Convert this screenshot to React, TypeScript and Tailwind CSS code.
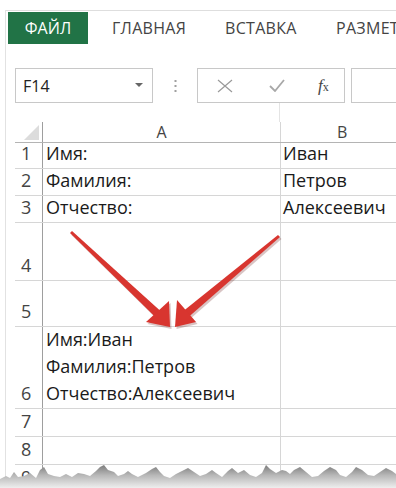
const rows: { n: string; h: string; a: string[]; b: string }[] = [
  { n: "1", h: "h-[26px]", a: ["Имя:"], b: "Иван" },
  { n: "2", h: "h-[27px]", a: ["Фамилия:"], b: "Петров" },
  { n: "3", h: "h-[27px]", a: ["Отчество:"], b: "Алексеевич" },
  { n: "4", h: "h-[58px]", a: [], b: "" },
  { n: "5", h: "h-[46px]", a: [], b: "" },
  { n: "6", h: "h-[82px]", a: ["Имя:Иван", "Фамилия:Петров", "Отчество:Алексеевич"], b: "" },
  { n: "7", h: "h-[28px]", a: [], b: "" },
  { n: "8", h: "h-[28px]", a: [], b: "" },
  { n: "9", h: "h-[28px]", a: [], b: "" },
];

function TornEdge() {
  const pts =
    "0,488 0,479 6,476 10,478 14,472 18,477 24,476 30,473 36,478 40,470 44,467 48,474 54,476 60,477 66,474 72,477 78,473 84,474 90,476 96,471 100,467 104,465 108,470 114,472 118,476 124,474 128,471 132,474 138,477 146,473 152,469 156,467 160,472 164,476 170,478 176,474 182,471 188,468 194,472 200,476 206,474 212,470 216,473 222,477 228,471 232,468 238,473 244,470 250,475 256,477 262,473 266,465 270,469 276,473 282,470 286,471 290,474 294,470 300,467 306,472 312,477 318,476 324,471 330,467 336,470 340,475 346,477 352,472 356,467 362,470 368,475 374,476 380,472 386,468 392,471 396,474 396,488";
  return (
    <svg className="absolute left-0 bottom-0" width="396" height="30" viewBox="0 458 396 30">
      <defs>
        <linearGradient id="torn" x1="0" y1="0" x2="0" y2="1">
          <stop offset="0" stopColor="#7c7c7c" />
          <stop offset="0.45" stopColor="#b8b8b8" />
          <stop offset="1" stopColor="#eeeeee" />
        </linearGradient>
      </defs>
      <polygon points={pts} fill="url(#torn)" />
    </svg>
  );
}

function Arrows() {
  return (
    <svg className="absolute left-0 top-0" width="396" height="488" viewBox="0 0 396 488">
      <g fill="#6b1a17" opacity="0.25" transform="translate(1.5,2)">
        <polygon points="72,230.9 162.7,313.1 157.3,318.9 70,233.1" />
        <polygon points="170,327 146,322 169,301" />
        <polygon points="278,234.9 183.4,311 188.6,317 280,237.1" />
        <polygon points="175,327 177,300 196,322" />
      </g>
      <g fill="#d8352f">
        <polygon points="72,230.9 162.7,313.1 157.3,318.9 70,233.1" />
        <polygon points="170,327 146,322 169,301" />
        <polygon points="278,234.9 183.4,311 188.6,317 280,237.1" />
        <polygon points="175,327 177,300 196,322" />
      </g>
    </svg>
  );
}

export default function App() {
  return (
    <div className="relative w-[396px] h-[488px] overflow-hidden bg-white font-['Open_Sans',sans-serif]">
      <div className="ml-[5px] h-full border-l border-[#e2e2e2]">
        {/* ribbon tabs */}
        <div className="mt-[10px] border-t border-[#dedede] flex items-center h-[34px] pt-[1px] text-[16px] text-[#444] whitespace-nowrap">
          <div className="shrink-0 ml-[2px] w-[80px] h-[32px] bg-[#217346] text-white flex items-center justify-center">
            ФАЙЛ
          </div>
          <div className="shrink-0 ml-[24px] w-[113px] tracking-[0.3px]">ГЛАВНАЯ</div>
          <div className="shrink-0 w-[111px] tracking-[0.3px]">ВСТАВКА</div>
          <div className="shrink-0 tracking-[0.3px]">РАЗМЕТКА</div>
        </div>

        {/* formula bar */}
        <div className="mt-[24px] flex h-[35px]">
          <div className="shrink-0 ml-[9px] w-[138px] border border-[#c8c8c8] flex items-center justify-between pl-[7px] pr-[9px] text-[16px] text-[#222]">
            <span>F14</span>
            <svg width="8" height="5" viewBox="0 0 8 5">
              <polygon points="0,0 8,0 4,4" fill="#666" />
            </svg>
          </div>
          <div className="shrink-0 w-[44px] flex items-center justify-center">
            <svg width="3" height="14" viewBox="0 0 3 14">
              <rect x="0.5" y="1" width="2" height="2" fill="#a0a0a0" />
              <rect x="0.5" y="6" width="2" height="2" fill="#a0a0a0" />
              <rect x="0.5" y="11" width="2" height="2" fill="#a0a0a0" />
            </svg>
          </div>
          <div className="shrink-0 w-[148px] border border-[#c8c8c8] flex items-center">
            <svg className="ml-[19px]" width="16" height="14" viewBox="0 0 16 14">
              <path d="M1 1 L15 13 M15 1 L1 13" stroke="#9a9a9a" strokeWidth="1.2" fill="none" />
            </svg>
            <svg className="ml-[36px]" width="16" height="13" viewBox="0 0 16 13">
              <path d="M1 7 L6 12 L15 1" stroke="#a8a8a8" strokeWidth="1.8" fill="none" />
            </svg>
            <span className="ml-[33px] font-['Liberation_Serif',serif] italic text-[17px] text-[#444] leading-none">
              f<span className="text-[12px] not-italic">x</span>
            </span>
          </div>
          <div className="ml-[6px] flex-1 border-y border-l border-[#c8c8c8]" />
        </div>

        <div className="h-[19px] ml-[9px] flex">
          <div className="w-[265px] border-r border-[#e4e4e4]" />
        </div>

        {/* grid */}
        <div className="ml-[9px] text-[18px] leading-[27px] text-[#1a1a1a]">
          <div className="flex h-[21px] border-b border-[#b4b4b4] text-[16px] text-[#444]">
            <div className="shrink-0 w-[28px] border-r border-[#9e9e9e] flex items-end justify-end pr-[3px] pb-[2px]">
              <svg width="15" height="15" viewBox="0 0 15 15">
                <polygon points="0,15 15,15 15,0" fill="#dcdcdc" />
              </svg>
            </div>
            <div className="shrink-0 w-[238px] border-r border-[#d6d6d6] flex items-center justify-center">A</div>
            <div className="flex-1 flex items-center pl-[56px]">B</div>
          </div>
          {rows.map((r) => (
            <div key={r.n} className={`flex ${r.h} border-b border-[#d6d6d6]`}>
              <div className="shrink-0 w-[28px] border-r border-[#9e9e9e] flex items-end pl-[6px] pb-[1px] text-[#444]">
                {r.n}
              </div>
              <div className="shrink-0 w-[238px] border-r border-[#d6d6d6] flex flex-col justify-end pl-[3px] pb-[1px] whitespace-nowrap">
                {r.a.map((t) => (
                  <div key={t}>{t}</div>
                ))}
              </div>
              <div className="flex-1 flex items-end pl-[2px] pb-[1px] whitespace-nowrap">{r.b}</div>
            </div>
          ))}
        </div>
      </div>
      <Arrows />
      <TornEdge />
    </div>
  );
}
